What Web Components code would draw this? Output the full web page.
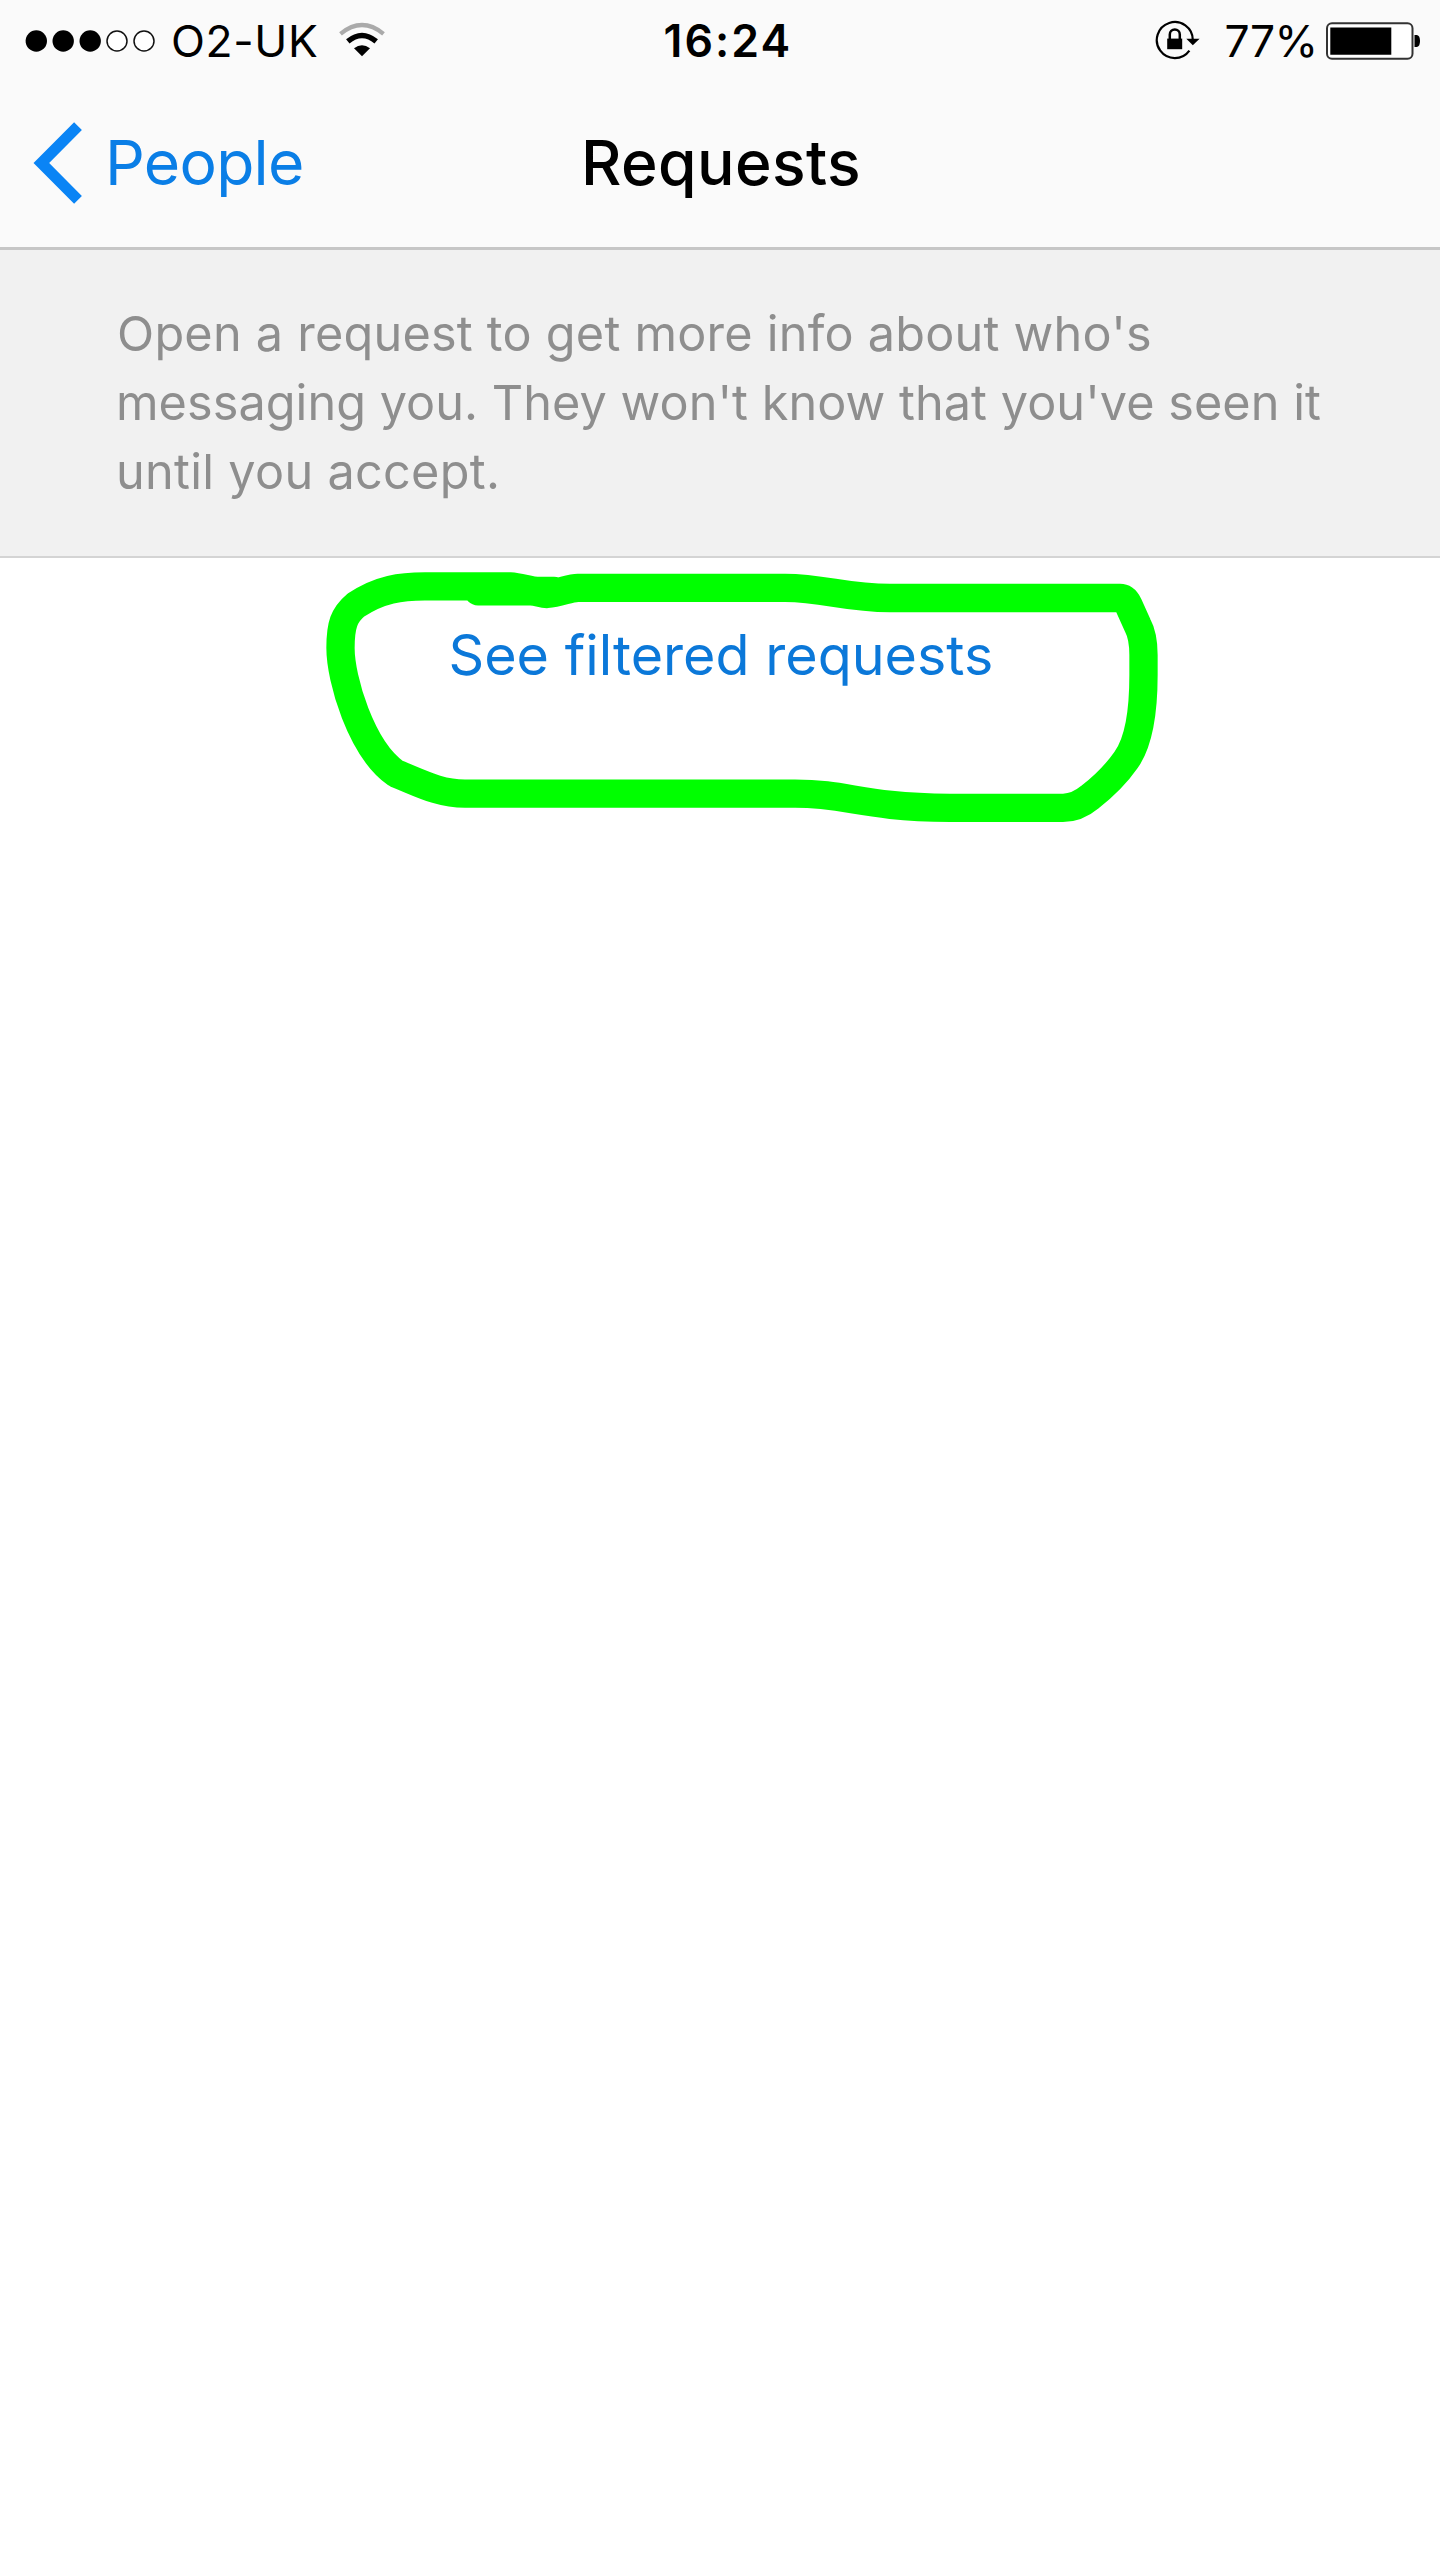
<!DOCTYPE html>
<html lang="en">
<head>
<meta charset="utf-8">
<title>Requests</title>
<style>
  html, body { margin: 0; background: #fff; }
  body { font-family: Inter, "Liberation Sans", sans-serif; color: #000; }
</style>
</head>
<body>
<requests-screen></requests-screen>
<script>
/* One line of text whose inked width equals the "width" attribute; tracking is adjusted to suit. */
class TrackedText extends HTMLElement {
  connectedCallback() {
    const root = this.attachShadow({ mode: 'open' });
    const size = +this.getAttribute('size');
    const weight = this.getAttribute('weight') || '400';
    const width = +this.getAttribute('width');
    const text = this.textContent;
    const ctx = document.createElement('canvas').getContext('2d');
    ctx.font = `${weight} ${size}px Inter, "Liberation Sans", sans-serif`;
    const m = ctx.measureText(text);
    const ink = m.actualBoundingBoxLeft + m.actualBoundingBoxRight;
    const spacing = (width - ink) / (text.length - 1);
    root.innerHTML = `<style>
      :host { display: block; flex: none; width: ${width}px; white-space: pre; font-size: ${size}px; font-weight: ${weight}; }
      span { display: block; margin-left: ${m.actualBoundingBoxLeft}px; letter-spacing: ${spacing}px; font-variant-ligatures: none; }
    </style><span><slot></slot></span>`;
  }
}
customElements.define('tracked-text', TrackedText);

const define = (name, html) => customElements.define(name, class extends HTMLElement {
  constructor() {
    super();
    this.attachShadow({ mode: 'open' }).innerHTML = html;
  }
});

define('signal-dots', `<style>:host{display:block;flex:none;width:130px;height:24px}svg{display:block}</style>
<svg width="130" height="24" viewBox="0 0 130 24">
  <g><circle cx="11.3" cy="12" r="10.7"/><circle cx="38.2" cy="12" r="10.7"/><circle cx="65.2" cy="12" r="10.7"/></g>
  <g fill="#fff" stroke="#111" stroke-width="1.5"><circle cx="92" cy="12" r="10"/><circle cx="119" cy="12" r="10"/></g>
</svg>`);

define('wifi-icon', `<style>:host{display:block;flex:none;width:46px;height:36px}svg{display:block}</style>
<svg width="46" height="36" viewBox="0 0 46 36">
  <path d="M1.5 11.8Q23 -5.8 44.5 11.8" fill="none" stroke="#aaa" stroke-width="4.2"/>
  <path d="M8.8 19.4Q23 7.6 37.2 19.4" fill="none" stroke="#000" stroke-width="5.4"/>
  <path d="M15 26.3Q23 20.4 31 26.3L23 34.3Z"/>
</svg>`);

define('rotation-lock-icon', `<style>:host{display:block;flex:none;width:46px;height:40px}svg{display:block}</style>
<svg width="46" height="40" viewBox="0 0 46 40">
  <path d="M34.4 30.6A18 18 0 1 1 37.8 20" fill="none" stroke="#000" stroke-width="2.2"/>
  <path d="M31.3 18.8H44.6L37.8 25.2Z"/>
  <path d="M12.2 18.6H27.2V29.2H12.2Z"/>
  <path d="M14.8 19V14.4a5 5 0 0 1 10 0V19" fill="none" stroke="#000" stroke-width="2.5"/>
</svg>`);

define('battery-icon', `<style>:host{display:block;flex:none;width:95px;height:38px}svg{display:block}</style>
<svg width="95" height="38" viewBox="0 0 95 38">
  <rect x="1" y="1.2" width="85.5" height="35.6" rx="5" fill="#fff" stroke="#333" stroke-width="2"/>
  <path d="M4.3 5.6H65.3V32.8H4.3Z"/>
  <path d="M88.5 13H91Q94 13.7 94 19T91 25H88.5Z"/>
</svg>`);

define('status-bar', `<style>
  :host{display:flex;align-items:center;height:82px;line-height:82px}
  .left,.right{display:flex;align-items:center;flex:1}
  .left{padding-left:25px}.right{justify-content:flex-end;padding-right:19px}
  .carrier{margin-left:18px}.wifi{margin:-2px 0 0 22px}
  .lock{margin:-3px 0 0}.percent{margin:0 12.5px 0 25.5px}
  .time{margin-left:8px}
</style>
<div class="left"><signal-dots></signal-dots><tracked-text class="carrier" size="44.4" width="144">O2-UK</tracked-text><wifi-icon class="wifi"></wifi-icon></div>
<tracked-text class="time" size="44.6" weight="600" width="123">16:24</tracked-text>
<div class="right"><rotation-lock-icon class="lock"></rotation-lock-icon><tracked-text class="percent" size="44.4" width="87">77%</tracked-text><battery-icon></battery-icon></div>`);

define('nav-bar', `<style>
  :host{display:flex;align-items:center;box-sizing:border-box;height:168px;padding:0 0 4px 32px;border-bottom:3px solid #c6c6c6;line-height:160px}
  svg{display:block;flex:none}
  .back{display:flex;align-items:center;gap:26px;color:#0a7ee6}
  .title{margin-left:284px}
</style>
<div class="back"><svg width="52" height="84" viewBox="0 0 52 84"><path d="M46 5.2L9.3 42L46 78.8" fill="none" stroke="#0a84f5" stroke-width="11"/></svg>
<tracked-text size="62.4" width="192">People</tracked-text></div>
<tracked-text class="title" size="62.4" weight="500" width="272">Requests</tracked-text>`);

define('info-banner', `<style>
  :host{display:block;box-sizing:border-box;height:308px;padding:49px 0 0 119px;background:#f1f1f1;border-bottom:2px solid #d4d4d4;color:#8e8e8e;line-height:69px}
</style>
<tracked-text size="48.6" width="1031">Open a request to get more info about who's</tracked-text>
<tracked-text size="48.6" width="1201">messaging you. They won't know that you've seen it</tracked-text>
<tracked-text size="48.6" width="378">until you accept.</tracked-text>`);

define('marker-ring', `<style>:host{display:block;position:absolute;left:320px;top:6px;width:850px;height:264px;pointer-events:none}svg{display:block}</style>
<svg width="850" height="264" viewBox="320 564 850 264" fill="none" stroke="#0f0" stroke-width="28.3" stroke-linecap="round" stroke-linejoin="round">
  <path d="M478 591.3H530C538 591.3 541 594 547 594C560 593 569 588 578 587.8H785C825 588 845 598 890 598H1120Q1125 598 1128.5 605L1137.5 625Q1143.5 636 1143.5 655V675C1143.5 710 1139 742 1126 760Q1112 780 1090 797Q1077 807.8 1063 807.8H950C860 807 850 793.7 795 793.7H465C439 793.7 420 783 396 773.5C361 749 340.500 679 340.500 648C340.500 625 344 615 356 605C380 589 401 586.300 425 586.300H510C522 587 529 591 540 591H554"/>
</svg>`);

define('filtered-link', `<style>
  :host{display:flex;position:relative;height:194px;padding-left:451.5px;line-height:194px;color:#0b78d9}
</style>
<tracked-text size="55.6" width="539.5">See filtered requests</tracked-text><marker-ring></marker-ring>`);

define('requests-screen', `<style>
  :host{display:block;width:1440px;height:2561px;overflow:hidden;background:#fff}
  header{background:#fafafa}
</style>
<header><status-bar></status-bar><nav-bar></nav-bar></header>
<main><info-banner></info-banner><filtered-link></filtered-link></main>`);
</script>
</body>
</html>
